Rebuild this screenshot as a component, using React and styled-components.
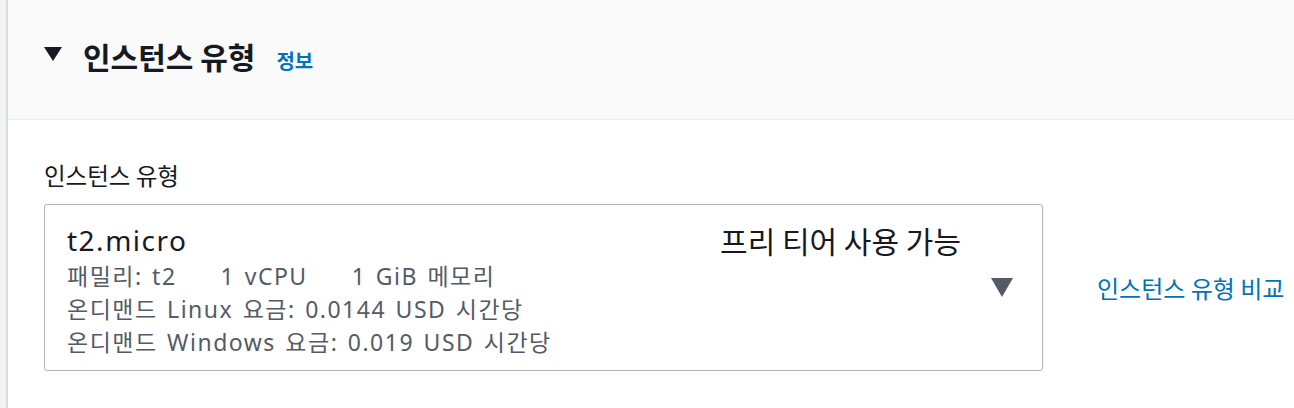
import React from 'react'
import styled, { createGlobalStyle } from 'styled-components'

const GlobalStyle = createGlobalStyle`
  body {
    margin: 0;
    background: #f2f3f3;
    font-family: "Noto Sans", "Noto Sans CJK KR", sans-serif;
  }
`;

const Page = styled.div`
  padding-left: 6px;
  height: 408px;
  background: #f2f3f3;
`;
const Panel = styled.div`
  height: 100%;
  border-left: 2px solid #dcdcdc;
  background: #ffffff;
  display: flex;
  flex-direction: column;
`;
const Header = styled.div`
  height: 112px;
  padding-bottom: 7px;
  background: #fafafa;
  border-bottom: 1px solid #eaeded;
  display: flex;
  align-items: center;
  padding-left: 36px;
  gap: 21px;
`;
const Caret = styled.span`
  width: 0;
  height: 0;
  border-left: ${({ $w }) => $w / 2}px solid transparent;
  border-right: ${({ $w }) => $w / 2}px solid transparent;
  border-top: ${({ $h }) => $h}px solid ${({ $color }) => $color};
  margin-bottom: ${({ $lift }) => $lift || 0}px;
  flex: none;
`;
const Title = styled.h2`
  margin: 0;
  font-family: "Noto Sans CJK KR", sans-serif;
  font-size: 30px;
  font-weight: 700;
  color: #16191f;
  display: flex;
  align-items: baseline;
  gap: 21px;
`;
const Info = styled.a`
  font-family: "Noto Sans CJK KR", sans-serif;
  font-size: 20px;
  font-weight: 700;
  color: #0073bb;
  text-decoration: none;
`;
const Body = styled.div`
  padding: 38px 36px 0;
  display: flex;
  flex-direction: column;
  gap: 12px;
`;
const Label = styled.div`
  font-family: "Noto Sans CJK KR", sans-serif;
  font-size: 23.5px;
  color: #16191f;
  line-height: 34px;
`;
const Row = styled.div`
  display: flex;
  align-items: center;
  gap: 54px;
`;
const Select = styled.div`
  flex: none;
  width: 999px;
  height: 167px;
  box-sizing: border-box;
  border: 1px solid #aab7b8;
  border-radius: 3px;
  display: flex;
  align-items: center;
  padding: 0 29px 0 22px;
`;
const Option = styled.div`
  flex: 1;
  display: flex;
  align-self: flex-start;
  padding-top: 15px;
`;
const OptionMain = styled.div`
  flex: 1;
  display: flex;
  flex-direction: column;
`;
const OptionLabel = styled.div`
  font-family: "Noto Sans", "Noto Sans CJK KR", sans-serif;
  font-size: 28px;
  letter-spacing: 1.5px;
  line-height: 40px;
  color: #16191f;
`;
const Desc = styled.div`
  font-family: "Noto Sans", "Noto Sans CJK KR", sans-serif;
  font-size: 23px;
  letter-spacing: 1.5px;
  word-spacing: 2px;
  line-height: 33px;
  color: #545b64;
  display: flex;
  gap: 44px;
`;
const Tag = styled.div`
  font-family: "Noto Sans CJK KR", sans-serif;
  font-size: 30px;
  line-height: 40px;
  color: #16191f;
  padding-right: 30px;
`;
const CompareLink = styled.a`
  font-family: "Noto Sans CJK KR", sans-serif;
  font-size: 24px;
  color: #0073bb;
  text-decoration: none;
  white-space: nowrap;
`;

export default function App() {
  return (
    <>
      <GlobalStyle />
      <Page>
        <Panel>
          <Header>
            <Caret $w={18} $h={14} $lift={4} $color="#16191f" />
            <Title>
              인스턴스 유형
              <Info href="#">정보</Info>
            </Title>
          </Header>
          <Body>
            <Label>인스턴스 유형</Label>
            <Row>
              <Select>
                <Option>
                  <OptionMain>
                    <OptionLabel>t2.micro</OptionLabel>
                    <Desc>
                      <span>패밀리: t2</span>
                      <span>1 vCPU</span>
                      <span>1 GiB 메모리</span>
                    </Desc>
                    <Desc>온디맨드 Linux 요금: 0.0144 USD 시간당</Desc>
                    <Desc>온디맨드 Windows 요금: 0.019 USD 시간당</Desc>
                  </OptionMain>
                  <Tag>프리 티어 사용 가능</Tag>
                </Option>
                <Caret $w={22} $h={19} $color="#545b64" />
              </Select>
              <CompareLink href="#">인스턴스 유형 비교</CompareLink>
            </Row>
          </Body>
        </Panel>
      </Page>
    </>
  )
}
